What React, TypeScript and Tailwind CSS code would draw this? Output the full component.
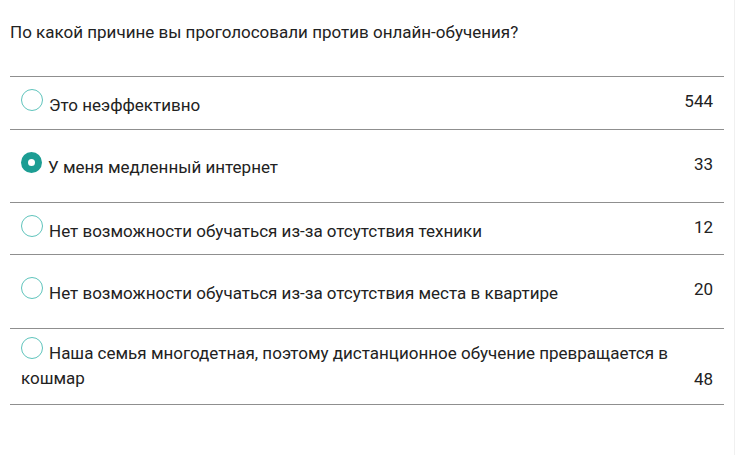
import React from "react";

type Row = {
  label: string;
  votes: number;
  selected?: boolean;
  pad: string;
  end?: boolean;
};

const ROWS: Row[] = [
  { label: "Это неэффективно", votes: 544, pad: "pt-[12px] pb-[12px]" },
  { label: "У меня медленный интернет", votes: 33, selected: true, pad: "pt-[22px] pb-[23px]" },
  { label: "Нет возможности обучаться из-за отсутствия техники", votes: 12, pad: "pt-[12px] pb-[11px]" },
  { label: "Нет возможности обучаться из-за отсутствия места в квартире", votes: 20, pad: "pt-[22px] pb-[23px]" },
  {
    label: "Наша семья многодетная, поэтому дистанционное обучение превращается в кошмар",
    votes: 48,
    pad: "pt-[8px] pb-[13px]",
    end: true,
  },
];

function Radio({ on }: { on?: boolean }) {
  return on ? (
    <span className="inline-block w-[21px] h-[21px] mr-[6px] rounded-full border-[7px] border-[#1c9d93] bg-white" />
  ) : (
    <span className="inline-block w-[22px] h-[22px] mr-[6px] rounded-full border-[1.5px] border-[#5fc4bc] bg-white" />
  );
}

export default function App() {
  return (
    <div className="w-[740px] h-[455px] bg-white text-[#222] font-['Roboto',sans-serif] text-[17px] leading-[24px]">
      <div className="w-[735px] h-full border-r border-[#f0f0f0]">
        <p className="pl-[10px] pt-[20px]">
          По какой причине вы проголосовали против онлайн-обучения?
        </p>
        <div className="ml-[10px] mt-[32px] w-[714px] border-t border-[#8f8f8f]">
          {ROWS.map((r) => (
            <div
              key={r.label}
              className={`flex justify-between border-b border-[#8f8f8f] ${r.pad} ${
                r.end ? "items-end" : "items-start"
              }`}
            >
              <div className={`flex-1 pl-[11px] ${r.end ? "leading-[25px]" : ""}`}>
                <Radio on={r.selected} />
                {r.label}
              </div>
              <div className="w-[50px] pr-[11px] text-right">{r.votes}</div>
            </div>
          ))}
        </div>
      </div>
    </div>
  );
}
